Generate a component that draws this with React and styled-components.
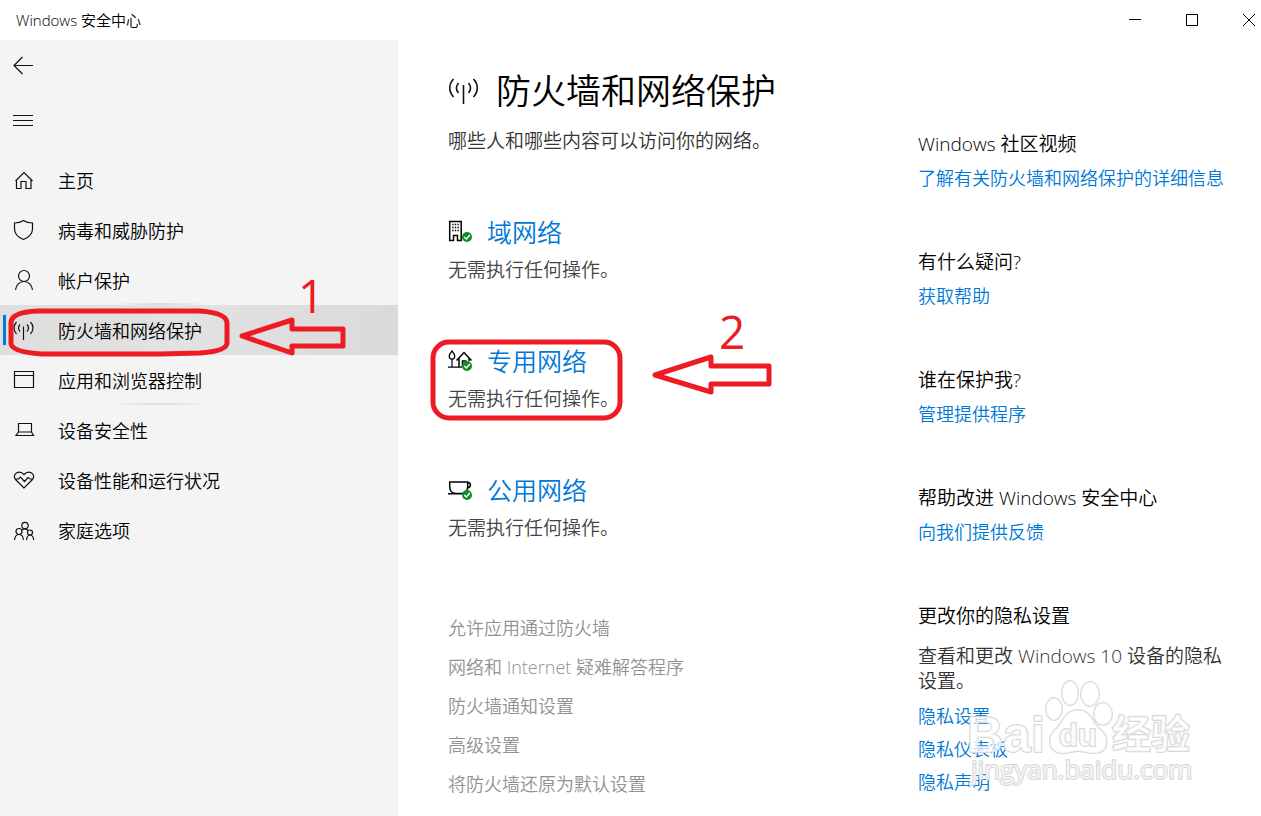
import { useState } from "react";
import styled, { createGlobalStyle } from "styled-components";

const GlobalStyle = createGlobalStyle`
  * {
    box-sizing: border-box;
  }

  body {
    margin: 0;
    background: #ffffff;
    color: #000000;
    font-family: "Open Sans", "Noto Sans CJK SC", sans-serif;
    font-size: 19px;
    font-weight: 350;
  }
`;

const Window = styled.div`
  position: relative;
  display: flex;
  flex-direction: column;
  min-height: 100vh;
  overflow: hidden;
`;

const TitleBar = styled.header`
  display: flex;
  justify-content: space-between;
  align-items: center;
  height: 40px;
  padding-left: 16px;
  font-size: 15px;
  line-height: 20px;
`;

const WindowButtons = styled.div`
  display: flex;
  margin-right: -16px;
`;

const WindowButton = styled.button`
  display: flex;
  align-items: center;
  justify-content: center;
  width: 57px;
  height: 40px;
  padding: 0;
  border: none;
  background: none;
`;

const Body = styled.div`
  display: flex;
  flex: 1;
`;

const Sidebar = styled.aside`
  flex: 0 0 398px;
  background: #f4f4f4;
`;

const IconButton = styled.button`
  display: flex;
  align-items: center;
  width: 48px;
  height: 50px;
  margin-bottom: 5px;
  padding: 0 0 0 12px;
  border: none;
  background: none;
`;

const Nav = styled.nav`
  padding-top: 5px;
`;

const NavItem = styled.a`
  position: relative;
  display: flex;
  align-items: center;
  gap: 22px;
  height: 50px;
  padding-left: 12px;
  background: ${(props) => (props.$active ? "linear-gradient(90deg, #dedede, #e2e2e2 45%, #dadada)" : "none")};
  color: #000000;
  font-size: 18px;
  text-decoration: none;

  span {
    padding-top: 2px;
    line-height: 26px;
  }

  &::before {
    content: "";
    position: absolute;
    left: 3px;
    top: 10px;
    width: 3px;
    height: 30px;
    background: ${(props) => (props.$active ? "#0078d7" : "none")};
  }

  &::after {
    content: "";
    position: absolute;
    left: 110px;
    bottom: 0;
    width: 100px;
    height: 2px;
    background: ${(props) => (props.$glow ? "linear-gradient(90deg, transparent, #dcdcdc, transparent)" : "none")};
  }
`;

const Content = styled.main`
  display: grid;
  grid-template-columns: minmax(0, 1fr) 310px;
  flex: 1;
  padding: 0 33px 0 50px;
`;

const Heading = styled.h1`
  display: flex;
  align-items: center;
  gap: 16px;
  margin: 25px 0 0;
  font-size: 35px;
  font-weight: 350;
  line-height: 52px;
`;

const Lead = styled.p`
  margin: 9px 0 0;
  color: #333333;
  line-height: 30px;
`;

const Networks = styled.div`
  display: flex;
  flex-direction: column;
  gap: 43px;
  margin-top: 56px;
`;

const Network = styled.section`
  position: relative;
  height: 86px;
`;

const NetworkTitle = styled.a`
  display: flex;
  align-items: center;
  gap: 15px;
  width: fit-content;
  color: #0078d7;
  font-size: 25px;
  line-height: 40px;
  text-decoration: none;
`;

const NetworkStatus = styled.p`
  margin: 4px 0 0;
  color: #444444;
  line-height: 28px;
`;

const Tasks = styled.ul`
  display: flex;
  flex-direction: column;
  gap: 13px;
  margin: 59px 0 0;
  padding: 0;
  list-style: none;
  font-size: 18px;
  line-height: 26px;

  a {
    color: #929292;
    text-decoration: none;
  }
`;

const Aside = styled.aside`
  display: flex;
  flex-direction: column;
  gap: 56px;
  padding-top: 90px;
`;

const Help = styled.section`
  h2 {
    margin: 0 0 6px;
    font-size: 19px;
    font-weight: 350;
    line-height: 29px;
  }

  p {
    margin: 0;
    padding: 7px 0 9px;
    color: #333333;
    line-height: 25px;
  }

  a {
    display: block;
    width: fit-content;
    margin-bottom: 7px;
    color: #0078d7;
    font-size: 18px;
    line-height: 26px;
    text-decoration: none;
    white-space: nowrap;
  }

  a:last-child {
    margin-bottom: 1px;
  }
`;

const Marker = styled.svg`
  position: absolute;
  left: ${(props) => props.$left}px;
  top: ${(props) => props.$top}px;
  overflow: visible;
  pointer-events: none;

  path,
  rect {
    fill: none;
    stroke: #ed1c24;
    stroke-width: 5;
    stroke-linejoin: round;
  }

  text {
    fill: #ed1c24;
    font-size: 46px;
    font-weight: 400;
  }
`;

const Watermark = styled.div`
  position: absolute;
  right: 64px;
  bottom: 24px;
  width: 230px;
  height: 112px;
  pointer-events: none;

  svg {
    display: block;
    overflow: visible;
  }

  text,
  .paw {
    fill: rgba(255, 255, 255, 0.7);
    stroke: #d8d8d8;
    stroke-width: 2;
    stroke-linejoin: round;
    paint-order: stroke;
  }

  text {
    font-family: "Liberation Sans", "Noto Sans CJK SC", sans-serif;
  }

  .site {
    font-family: "Open Sans", sans-serif;
  }
`;

const NAV_ITEMS = [
  { label: "主页", icon: "home" },
  { label: "病毒和威胁防护", icon: "shield" },
  { label: "帐户保护", icon: "person", glow: true },
  { label: "防火墙和网络保护", icon: "signal" },
  { label: "应用和浏览器控制", icon: "browser", glow: true },
  { label: "设备安全性", icon: "laptop" },
  { label: "设备性能和运行状况", icon: "heart" },
  { label: "家庭选项", icon: "family" },
];

const NETWORKS = [
  { label: "域网络", icon: "building" },
  { label: "专用网络", icon: "house", marked: true },
  { label: "公用网络", icon: "cup" },
];

const TASKS = ["允许应用通过防火墙", "网络和 Internet 疑难解答程序", "防火墙通知设置", "高级设置", "将防火墙还原为默认设置"];

const HELP = [
  { title: "Windows 社区视频", links: ["了解有关防火墙和网络保护的详细信息"] },
  { title: "有什么疑问?", links: ["获取帮助"] },
  { title: "谁在保护我?", links: ["管理提供程序"] },
  { title: "帮助改进 Windows 安全中心", links: ["向我们提供反馈"] },
  {
    title: "更改你的隐私设置",
    text: "查看和更改 Windows 10 设备的隐私设置。",
    links: ["隐私设置", "隐私仪表板", "隐私声明"],
  },
];

const ICONS = {
  back: <path d="M2 12.500h19M10.500 4L2 12.500l8.500 8.500" />,
  menu: <path d="M1 7.500h20M1 12.500h20M1 17.500h20" />,
  home: <path d="M3.500 13L12 4.500l8.500 8.500M4.500 12v8.500h4.500v-7h5v7h5V12" />,
  shield: <path d="M11.500 2.500c2.500 1.700 5.500 2.500 9 2.500v6c0 5-4 8.500-9 10.500-5-2-9-5.500-9-10.500V5c3.500 0 6.500-.8 9-2.500z" />,
  person: (
    <>
      <circle cx="12" cy="8" r="5.500" />
      <path d="M3.500 22c.5-5 4-8.500 8.500-8.500s8 3.500 8.500 8.500" />
    </>
  ),
  signal: (
    <path d="M11.500 8.500V22M8 6.500c-1.700 2-1.700 5 0 7M15 6.500c1.700 2 1.700 5 0 7M4.500 4c-3.300 3.500-3.300 8.500 0 12M18.500 4c3.300 3.500 3.300 8.500 0 12" />
  ),
  browser: <path d="M2.500 3.500h19v16h-19zM2.500 7.500h19" />,
  laptop: <path d="M6.500 5.500h13v8.500h-13zM6.500 14L4 17.500h17.500l-2-3.500" />,
  heart: (
    <path d="M12 20l-8.500-8.500c-4-5 3.500-10.500 8.500-5 5-5.500 12.500 0 8.500 5zM3.500 11h3l2-2 4 4.500 3.500-4 2 1.500h3" />
  ),
  family: (
    <>
      <circle cx="13" cy="7.500" r="3.200" />
      <circle cx="7" cy="13.500" r="3" />
      <circle cx="18" cy="14.500" r="2.500" />
      <path d="M2.500 22c.3-3 2-5.500 4.500-5.500s4.200 2.500 4.500 5.500M14.500 22c.3-2.700 1.500-5 3.500-5s3.400 2.300 3.700 5M10 12c1.200-1.700 5-1.700 6 .5" />
    </>
  ),
  wideSignal: (
    <path d="M15.500 10v19M10.500 8c-2.500 3-2.500 7 0 10M20.500 8c2.500 3 2.500 7 0 10M5.500 4c-5 5.500-5 12.500 0 18M25.500 4c5 5.500 5 12.500 0 18" />
  ),
};

const Icon = ({ name, size = 24, strokeWidth = 1.2 }) => (
  <svg width={size} height={size} viewBox={`0 0 ${size} ${size}`} fill="none" stroke="#111" strokeWidth={strokeWidth} aria-hidden="true">
    {ICONS[name]}
  </svg>
);

const NETWORK_ICONS = {
  building: (
    <>
      <path d="M1.700 20.500v-19h11.500v19H9.500v-5h-4v5z" />
      <path d="M4.200 4.500h1.400M6.800 4.500h1.400M9.400 4.500h1.400M4.200 7.500h1.400M6.800 7.500h1.400M9.400 7.500h1.400M4.200 10.500h1.400M6.800 10.500h1.400M9.400 10.500h1.400" />
    </>
  ),
  house: (
    <>
      <path d="M4 2c-2 2.300-2.800 3.800-2.800 5.200 0 4 5.600 4 5.600 0C6.800 5.800 6 4.300 4 2zM4 10v8M0 18.200h14" strokeWidth="1.200" />
      <path d="M8.500 11.500l7.500-8 7.500 8M11 9.500v8.500M14.500 18v-6h4M21 9.500V12" />
    </>
  ),
  cup: (
    <path d="M1.700 4h18v4.500c0 3.500-2 7-5 7H7.500c-3.500 0-5.800-3-5.800-7zM19.500 4.500c4-.5 4 5.500-.5 5.500M0 15.700h14" />
  ),
};

const NetworkIcon = ({ name }) => (
  <svg width="24" height="24" viewBox="0 0 24 24" fill="none" stroke="#000" strokeWidth="1.500" overflow="visible" aria-hidden="true">
    {NETWORK_ICONS[name]}
    <circle cx="19" cy="17" r="5" fill="#0c8f24" stroke="none" />
    <path d="M16.300 17l2 2 3.600-4" stroke="#fff" />
  </svg>
);

const App = () => {
  const [active, setActive] = useState("防火墙和网络保护");

  return (
    <Window>
      <GlobalStyle />
      <TitleBar>
        <span>Windows 安全中心</span>
        <WindowButtons>
          <WindowButton aria-label="最小化">
            <svg width="12" height="12" stroke="#000" fill="none"><path d="M0 5.500h12" /></svg>
          </WindowButton>
          <WindowButton aria-label="最大化">
            <svg width="12" height="12" stroke="#000" fill="none"><path d="M.5.5h11v11H.5z" /></svg>
          </WindowButton>
          <WindowButton aria-label="关闭">
            <svg width="12" height="12" stroke="#000" fill="none"><path d="M0 0l12 12M12 0L0 12" /></svg>
          </WindowButton>
        </WindowButtons>
      </TitleBar>
      <Body>
        <Sidebar>
          <IconButton aria-label="返回"><Icon name="back" /></IconButton>
          <IconButton aria-label="菜单"><Icon name="menu" strokeWidth={1} /></IconButton>
          <Nav>
            {NAV_ITEMS.map(({ label, icon, glow }) => (
              <NavItem key={label} href="#" $active={active === label} $glow={glow} onClick={() => setActive(label)}>
                <Icon name={icon} />
                <span>{label}</span>
                {icon === "signal" && (
                  <Marker $left={0} $top={0} width="350" height="50">
                    <path d="M38 6H200Q227 8 227 18V38Q227 46 200 48L160 49H42Q11 47 11 38V18Q11 7 38 6z" />
                    <path d="M242 31L292 15V24H343V41H292V48z" />
                    <text x="298" y="8">1</text>
                  </Marker>
                )}
              </NavItem>
            ))}
          </Nav>
        </Sidebar>
        <Content>
          <div>
            <Heading>
              <Icon name="wideSignal" size={32} strokeWidth={1.6} />
              防火墙和网络保护
            </Heading>
            <Lead>哪些人和哪些内容可以访问你的网络。</Lead>
            <Networks>
              {NETWORKS.map(({ label, icon, marked }) => (
                <Network key={label}>
                  <NetworkTitle href="#">
                    <NetworkIcon name={icon} />
                    {label}
                  </NetworkTitle>
                  <NetworkStatus>无需执行任何操作。</NetworkStatus>
                  {marked && (
                    <Marker $left={-18} $top={-1} width="350" height="82">
                      <rect x="3" y="2" width="187" height="76" rx="16" />
                      <path d="M225 35L281 17V26H339V44H281V52z" />
                      <text x="289" y="9">2</text>
                    </Marker>
                  )}
                </Network>
              ))}
            </Networks>
            <Tasks>
              {TASKS.map((task) => (
                <li key={task}><a href="#">{task}</a></li>
              ))}
            </Tasks>
          </div>
          <Aside>
            {HELP.map(({ title, text, links }) => (
              <Help key={title}>
                <h2>{title}</h2>
                {text && <p>{text}</p>}
                {links.map((link) => (
                  <a key={link} href="#">{link}</a>
                ))}
              </Help>
            ))}
          </Aside>
        </Content>
      </Body>
      <Watermark>
        <svg width="230" height="112" viewBox="0 0 230 112">
          <text x="0" y="72" fontSize="50" fontWeight="700">Bai</text>
          <g className="paw">
            <ellipse cx="87" cy="29" rx="8" ry="11" />
            <ellipse cx="103" cy="13" rx="8" ry="12" />
            <ellipse cx="123" cy="14" rx="9" ry="12" />
            <ellipse cx="136" cy="34" rx="9" ry="11" />
            <path d="M111 30c-14 0-15 14-23 20-8 7-7 22 6 23 7 1 11-2 17-2s11 3 18 2c13-1 13-16 5-23-8-6-10-20-23-20z" />
          </g>
          <text x="92" y="66" fontSize="31" fontWeight="700">du</text>
          <text x="145" y="68" fontSize="39" fontWeight="700">经验</text>
          <text className="site" x="4" y="99" fontSize="26" fontWeight="400">jingyan.baidu.com</text>
        </svg>
      </Watermark>
    </Window>
  );
};

export default App;
